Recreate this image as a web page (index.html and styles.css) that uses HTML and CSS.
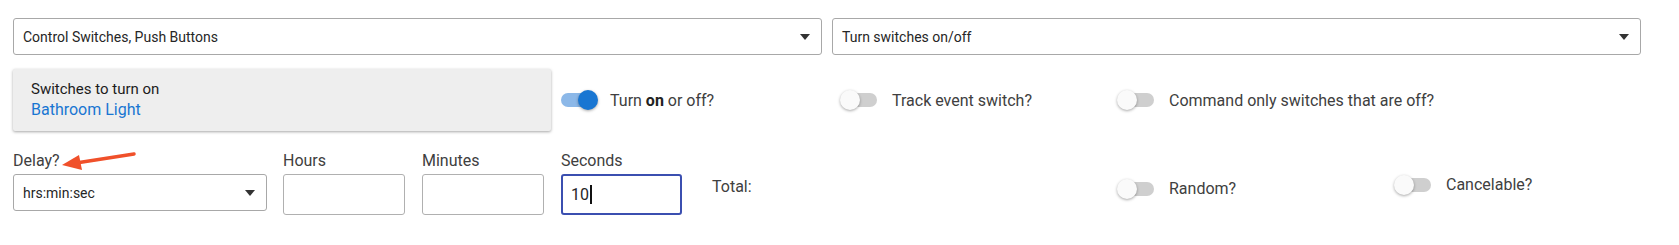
FILE: index.html
```html
<!DOCTYPE html>
<html lang="en">
<head>
    <meta charset="UTF-8">
    <meta name="viewport" content="width=device-width, initial-scale=1.0">
    <title>Control Switches</title>
    <link rel="stylesheet" href="styles.css">
</head>
<body>
    <div id="page">
        <div class="row-selects">
            <div class="select">
                <span>Control Switches, Push Buttons</span>
                <span class="caret"></span>
            </div>
            <div class="select">
                <span>Turn switches on/off</span>
                <span class="caret"></span>
            </div>
        </div>

        <div class="row row-switches">
            <div class="device-card">
                <div class="device-title">Switches to turn on</div>
                <div class="device-value">Bathroom Light</div>
            </div>
            <div class="toggle-item w-onoff">
                <span class="toggle on"><span class="knob"></span></span>
                <span class="toggle-label">Turn <b>on</b> or off?</span>
            </div>
            <div class="toggle-item w-track">
                <span class="toggle"><span class="knob"></span></span>
                <span class="toggle-label">Track event switch?</span>
            </div>
            <div class="toggle-item">
                <span class="toggle"><span class="knob"></span></span>
                <span class="toggle-label">Command only switches that are off?</span>
            </div>
        </div>

        <div class="row row-delay">
            <div class="field field-delay">
                <label>Delay?</label>
                <div class="select">
                    <span>hrs:min:sec</span>
                    <span class="caret"></span>
                </div>
                <svg class="pointer" width="78" height="22" viewBox="0 0 78 22">
                    <line x1="74" y1="3" x2="16" y2="12" stroke="#f0502a" stroke-width="3.5" stroke-linecap="round"/>
                    <polygon points="2,14 19,4 22,19" fill="#f0502a"/>
                </svg>
            </div>
            <div class="field field-hours">
                <label>Hours</label>
                <div class="input"></div>
            </div>
            <div class="field field-minutes">
                <label>Minutes</label>
                <div class="input"></div>
            </div>
            <div class="field field-seconds">
                <label>Seconds</label>
                <div class="input focused">10<span class="cursor"></span></div>
            </div>
            <div class="total">Total:</div>
            <div class="toggle-item w-random">
                <span class="toggle"><span class="knob"></span></span>
                <span class="toggle-label">Random?</span>
            </div>
            <div class="toggle-item w-cancel">
                <span class="toggle"><span class="knob"></span></span>
                <span class="toggle-label">Cancelable?</span>
            </div>
        </div>
    </div>
</body>
</html>
```

FILE: styles.css
```css
body {
    margin: 0;
    font-family: Roboto, "Noto Sans", Arial, sans-serif;
    background-color: white;
    color: #404040;
}
#page {
    padding: 18px 0 0 13px;
    width: 1628px;
}
.row {
    display: flex;
}
.row-selects {
    display: grid;
    grid-template-columns: 1fr 1fr;
    column-gap: 10px;
}
.select {
    box-sizing: border-box;
    height: 37px;
    border: 1px solid #a8a8a8;
    border-radius: 3px;
    display: flex;
    align-items: center;
    justify-content: space-between;
    padding: 0 11px 0 9px;
    font-size: 14px;
    color: #262626;
}
.caret {
    width: 0;
    height: 0;
    border-left: 5px solid transparent;
    border-right: 5px solid transparent;
    border-top: 6px solid #333;
}
.row-switches {
    margin-top: 14px;
    align-items: center;
}
.device-card {
    box-sizing: border-box;
    width: 538px;
    height: 62px;
    background-color: #eeeeee;
    box-shadow: 0 1px 3px rgba(0,0,0,0.35);
    border-radius: 2px;
    padding: 10px 18px;
}
.device-title {
    color: #1c1c1c;
    font-size: 15px;
    line-height: 20px;
}
.device-value {
    color: #1976d2;
    font-size: 16px;
    line-height: 22px;
}
.toggle-item {
    display: flex;
    align-items: center;
    font-size: 16px;
    line-height: 19px;
}
.w-onoff {
    margin-left: 10px;
    width: 282px;
}
.w-track {
    width: 277px;
}
.toggle {
    position: relative;
    width: 34px;
    height: 14px;
    border-radius: 7px;
    background-color: #cfcfcf;
    flex-shrink: 0;
}
.toggle.on {
    background-color: #8cb8e8;
}
.knob {
    position: absolute;
    top: -3px;
    left: -3px;
    width: 20px;
    height: 20px;
    border-radius: 50%;
    background-color: #fafafa;
    box-shadow: 0 1px 3px rgba(0,0,0,0.35);
}
.toggle.on .knob {
    left: auto;
    right: -3px;
    background-color: #1976d2;
}
.toggle-label {
    margin-left: 15px;
}
.toggle-label b {
    color: #222;
}
.row-delay {
    margin-top: 20px;
    align-items: flex-start;
}
.field {
    display: flex;
    flex-direction: column;
}
.field label {
    font-size: 16px;
    line-height: 19px;
    margin-bottom: 4px;
}
.field-delay {
    position: relative;
    width: 254px;
}
.pointer {
    position: absolute;
    left: 47px;
    top: 0;
}
.input {
    box-sizing: border-box;
    height: 41px;
    border: 1px solid #b0b0b0;
    border-radius: 3px;
    display: flex;
    align-items: center;
    padding-left: 9px;
    font-size: 16px;
    color: #262626;
}
.input.focused {
    border: 2px solid #3b4fb0;
    padding-left: 8px;
}
.cursor {
    display: inline-block;
    width: 2px;
    height: 19px;
    background-color: #111;
    margin-left: 1px;
}
.field-hours {
    margin-left: 16px;
    width: 122px;
}
.field-minutes {
    margin-left: 17px;
    width: 122px;
}
.field-seconds {
    margin-left: 17px;
    width: 121px;
}
.total {
    margin-left: 30px;
    width: 408px;
    margin-top: 26px;
    font-size: 16px;
    line-height: 19px;
}
.w-random {
    width: 277px;
    margin-top: 28px;
}
.w-cancel {
    margin-top: 24px;
}
```
